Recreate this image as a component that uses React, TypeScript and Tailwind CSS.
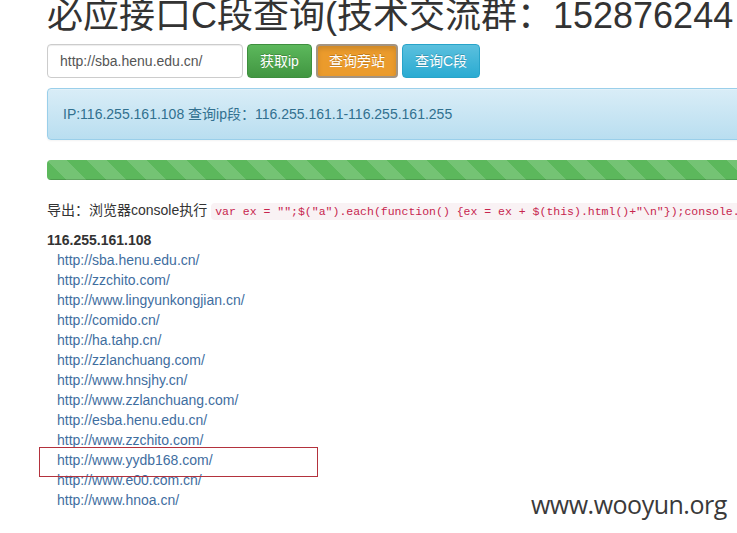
const links = [
  "http://sba.henu.edu.cn/",
  "http://zzchito.com/",
  "http://www.lingyunkongjian.cn/",
  "http://comido.cn/",
  "http://ha.tahp.cn/",
  "http://zzlanchuang.com/",
  "http://www.hnsjhy.cn/",
  "http://www.zzlanchuang.com/",
  "http://esba.henu.edu.cn/",
  "http://www.zzchito.com/",
  "http://www.yydb168.com/",
  "http://www.e00.com.cn/",
  "http://www.hnoa.cn/",
];

const code = `var ex = "";$("a").each(function() {ex = ex + $(this).html()+"\\n"});console.log(ex);`;

export default function App() {
  return (
    <div className="relative w-[737px] h-[533px] overflow-hidden bg-white text-[#333] font-['Liberation_Sans','Noto_Sans_CJK_SC',sans-serif] text-[14px] leading-[20px]">
      <div className="w-[1100px] pl-[47px]">
        {/* title */}
        <h1 className="-mt-1 text-[36px] leading-[40px] font-normal whitespace-nowrap text-[#333]">
          必应接口C段查询(技术交流群：152876244
        </h1>

        {/* form row */}
        <div className="mt-[8px] flex items-center">
          <input
            readOnly
            value="http://sba.henu.edu.cn/"
            className="h-[34px] w-[196px] rounded-[4px] border border-[#ccc] px-3 text-[14px] text-[#555] shadow-[inset_0_1px_1px_rgba(0,0,0,0.075)] outline-none"
          />
          <button className="ml-[4px] h-[34px] rounded-[4px] border border-[#3e8f3e] bg-[linear-gradient(to_bottom,#5cb85c,#419641)] px-3 text-white [text-shadow:0_-1px_0_rgba(0,0,0,0.2)]">
            获取ip
          </button>
          <button className="ml-[4px] h-[34px] rounded-[4px] border-2 border-[#a39482] bg-[#eb9b2c] px-[11px] text-white shadow-[inset_0_3px_5px_rgba(0,0,0,0.125)] [text-shadow:0_-1px_0_rgba(0,0,0,0.2)]">
            查询旁站
          </button>
          <button className="ml-[4px] h-[34px] rounded-[4px] border border-[#28a4c9] bg-[linear-gradient(to_bottom,#5bc0de,#2aabd2)] px-3 text-white [text-shadow:0_-1px_0_rgba(0,0,0,0.2)]">
            查询C段
          </button>
        </div>

        {/* result alert */}
        <div className="mt-[10px] rounded-[4px] border border-[#9acfea] bg-[linear-gradient(to_bottom,#d9edf7,#b9def0)] p-[15px] text-[#31708f] shadow-[inset_0_1px_0_rgba(255,255,255,0.25),0_1px_2px_rgba(0,0,0,0.05)]">
          IP:116.255.161.108 查询ip段：116.255.161.1-116.255.161.255
        </div>

        {/* progress */}
        <div className="mt-[20px] h-[20px] overflow-hidden rounded-[4px] bg-[#f5f5f5]">
          <div className="h-full w-full bg-[#5cb85c] bg-[linear-gradient(45deg,rgba(255,255,255,0.15)_25%,transparent_25%,transparent_50%,rgba(255,255,255,0.15)_50%,rgba(255,255,255,0.15)_75%,transparent_75%,transparent)] bg-[length:40px_40px] shadow-[inset_0_-1px_0_rgba(0,0,0,0.15)]" />
        </div>

        {/* export hint */}
        <p className="mt-[20px] h-[20px] whitespace-nowrap">
          导出：浏览器console执行{" "}
          <code className="rounded-[4px] bg-[#f9f2f4] px-[4px] py-[2px] font-['Liberation_Mono',monospace] text-[11.5px] leading-[16px] text-[#c7254e]">
            {code}
          </code>
        </p>

        {/* results */}
        <div className="mt-[10px]">
          <div className="font-bold text-[#333]">116.255.161.108</div>
          <div className="pl-[10px]">
            {links.map((l) => (
              <div key={l}>
                <a href="#" className="text-[#3f6e9f]">
                  {l}
                </a>
              </div>
            ))}
          </div>
        </div>
      </div>

      {/* red highlight annotation */}
      <div className="absolute left-[39px] top-[447px] h-[30px] w-[279px] border-[1.5px] border-[#b3323d]" />

      {/* watermark */}
      <div className="absolute left-[531px] top-[489px] whitespace-nowrap font-['Open_Sans',sans-serif] text-[25px] leading-[30px] tracking-[-0.5px] text-[#3a3a3a]">
        www.wooyun.org
      </div>
    </div>
  );
}
